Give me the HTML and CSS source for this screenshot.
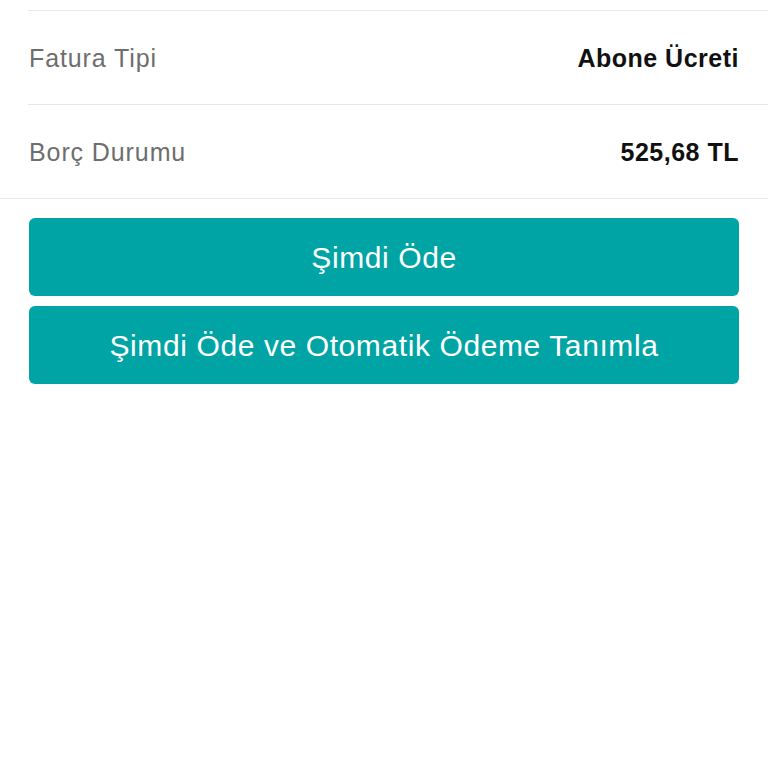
FILE: index.html
```html
<!DOCTYPE html>
<html lang="tr">
<head>
  <meta charset="UTF-8">
  <meta name="viewport" content="width=device-width, initial-scale=1">
  <title>Fatura</title>
  <link rel="stylesheet" href="styles.css">
</head>
<body>

  <div class="details">
    <div class="row">
      <span class="label">Fatura Tipi</span>
      <span class="value">Abone Ücreti</span>
    </div>
    <div class="row">
      <span class="label">Borç Durumu</span>
      <span class="value">525,68 TL</span>
    </div>
  </div>

  <div class="actions">
    <button class="pay-btn">Şimdi Öde</button>
    <button class="pay-btn">Şimdi Öde ve Otomatik Ödeme Tanımla</button>
  </div>

</body>
</html>
```

FILE: styles.css
```css
body {
  margin: 0;
  padding: 0;
  background: #ffffff;
  color: #111;
  font-family: 'Liberation Sans', Arial, sans-serif;
}

.details {
  padding-top: 10px;
  border-bottom: 1px solid #e6e6e6;
}

.row {
  display: flex;
  justify-content: space-between;
  align-items: center;
  height: 91px;
  margin-left: 28px;
  padding-right: 29px;
  padding-top: 2px;
  border-top: 1px solid #e6e6e6;
}

.label {
  font-size: 25px;
  letter-spacing: 0.9px;
  color: #6e6e6e;
  margin-left: 1px;
}

.value {
  font-size: 25px;
  font-weight: 600;
  letter-spacing: 0.5px;
  color: #111;
}

.actions {
  display: flex;
  flex-direction: column;
  gap: 10px;
  padding: 19px 29px 0 29px;
}

.pay-btn {
  height: 78px;
  border: none;
  border-radius: 6px;
  background-color: #00a4a4;
  color: #ffffff;
  font-family: 'Liberation Sans', Arial, sans-serif;
  font-size: 30px;
  letter-spacing: 0.6px;
  padding-top: 2px;
  cursor: pointer;
}
```
